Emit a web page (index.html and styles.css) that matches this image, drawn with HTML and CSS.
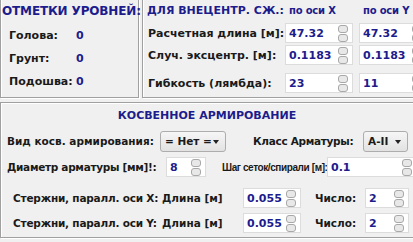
FILE: index.html
```html
<!DOCTYPE html>
<html lang="ru">
<head>
    <meta charset="UTF-8">
    <title>Армирование</title>
    <link rel="stylesheet" href="styles.css">
</head>
<body>
    <div class="top">
        <div class="panel levels">
            <div class="title big">ОТМЕТКИ УРОВНЕЙ:</div>
            <div class="lv-row"><span class="lv-label">Голова:</span><span class="val">0</span></div>
            <div class="lv-row"><span class="lv-label">Грунт:</span><span class="val">0</span></div>
            <div class="lv-row"><span class="lv-label">Подошва:</span><span class="val">0</span></div>
        </div>
        <div class="panel ecc">
            <div class="title ecc-title">ДЛЯ ВНЕЦЕНТР. СЖ.:</div>
            <div class="axis">по оси X</div>
            <div class="axis">по оси Y</div>

            <div class="ecc-label">Расчетная длина [м]:</div>
            <div class="field"><span class="val">47.32</span><span class="spin"><i></i><i></i></span></div>
            <div class="field"><span class="val">47.32</span><span class="spin"><i></i><i></i></span></div>

            <div class="ecc-label">Случ. эксцентр. [м]:</div>
            <div class="field"><span class="val">0.1183</span><span class="spin"><i></i><i></i></span></div>
            <div class="field"><span class="val">0.1183</span><span class="spin"><i></i><i></i></span></div>

            <div class="ecc-label row3">Гибкость (лямбда):</div>
            <div class="field row3"><span class="val">23</span><span class="spin"><i></i><i></i></span></div>
            <div class="field row3"><span class="val">11</span><span class="spin"><i></i><i></i></span></div>
        </div>
    </div>

    <div class="panel armor">
        <div class="armor-title">КОСВЕННОЕ АРМИРОВАНИЕ</div>
        <div class="armor-row">
            <span class="lbl type-lbl">Вид косв. армирования:</span>
            <span class="select sel-type">= Нет =<span class="arrow"></span></span>
            <span class="lbl cls-lbl">Класс Арматуры:</span>
            <span class="select sel-class">A-II<span class="arrow"></span></span>
        </div>
        <div class="armor-row">
            <span class="lbl diam-lbl">Диаметр арматуры [мм]!:</span>
            <span class="field f-diam"><span class="val">8</span><span class="spin"><i></i><i></i></span></span>
            <span class="lbl step-lbl">Шаг сеток/спирали [м]:</span>
            <span class="field f-step"><span class="val">0.1</span><span class="spin"><i></i><i></i></span></span>
        </div>
        <div class="rods">
            <div class="rod-row">
                <span class="lbl rod-name">Стержни, паралл. оси X:</span>
                <span class="lbl rod-len">Длина [м]</span>
                <span class="field f-len"><span class="val">0.055</span><span class="spin"><i></i><i></i></span></span>
                <span class="lbl rod-num">Число:</span>
                <span class="field f-num"><span class="val">2</span><span class="spin"><i></i><i></i></span></span>
            </div>
            <div class="rod-row">
                <span class="lbl rod-name">Стержни, паралл. оси Y:</span>
                <span class="lbl rod-len">Длина [м]</span>
                <span class="field f-len"><span class="val">0.055</span><span class="spin"><i></i><i></i></span></span>
                <span class="lbl rod-num">Число:</span>
                <span class="field f-num"><span class="val">2</span><span class="spin"><i></i><i></i></span></span>
            </div>
        </div>
    </div>
</body>
</html>
```

FILE: styles.css
```css
body {
    margin: 0;
    width: 413px;
    height: 242px;
    overflow: hidden;
    background-color: #f0f0f0;
    font-family: "DejaVu Sans", Verdana, sans-serif;
    font-size: 11px;
    font-weight: bold;
    color: #1a1a1a;
}
.top {
    display: flex;
    gap: 3px;
    margin-top: -3px;
    height: 101px;
}
.panel {
    box-sizing: border-box;
    border: 1px solid #a0a0a0;
    box-shadow: inset 1px 1px 0 #fff, 1px 1px 0 #fff;
}
.title {
    color: #1c1c8c;
    white-space: nowrap;
}
.big {
    font-size: 12px;
    letter-spacing: -0.15px;
}
.val {
    color: #1c1c8c;
}

/* levels */
.levels {
    width: 139px;
    padding: 6px 0 0 1px;
    flex: none;
}
.lv-row {
    display: flex;
    margin-top: 10px;
    padding-left: 7px;
    height: 13px;
}
.levels .title + .lv-row {
    margin-top: 11px;
}
.lv-label {
    width: 67px;
}

/* eccentric compression */
.ecc {
    flex: none;
    width: 300px;
    display: grid;
    grid-template-columns: 136px 68px 68px;
    grid-template-rows: 17px 20px 20px 4px 20px;
    column-gap: 6px;
    row-gap: 2px;
    padding: 6px 0 0 0;
    align-items: center;
}
.ecc-title {
    align-self: start;
    padding-left: 4px;
}
.axis {
    align-self: start;
    color: #1c1c8c;
    padding: 1px 0 0 4px;
    font-size: 10px;
    letter-spacing: -0.2px;
    white-space: nowrap;
}
.ecc-label {
    padding-left: 5px;
    white-space: nowrap;
}
.row3 {
    grid-row: 5;
}
.field {
    box-sizing: border-box;
    flex: none;
    height: 20px;
    display: flex;
    align-items: center;
    justify-content: space-between;
    background-color: #fff;
    border: 1px solid #dcdcdc;
    padding: 0 4px 0 3px;
    font-size: 11px;
}
.spin {
    display: flex;
    flex-direction: column;
    gap: 1px;
}
.spin i {
    display: block;
    width: 8px;
    height: 6px;
    border: 1px solid #a8a8a8;
    border-radius: 3px;
    background-color: #e8e8e8;
}

/* indirect reinforcement */
.armor {
    margin-top: 4px;
    width: 420px;
    height: 136px;
    padding: 6px 0 0 6px;
    font-size: 10.5px;
}
.armor-title {
    text-align: center;
    color: #1c1c8c;
    font-size: 11px;
    margin-left: -12px;
    height: 14px;
}
.armor-row {
    display: flex;
    align-items: center;
    margin-top: 8px;
    height: 20px;
}
.armor-row + .armor-row {
    margin-top: 6px;
}
.lbl {
    flex: none;
    white-space: nowrap;
}
.select {
    box-sizing: border-box;
    flex: none;
    position: relative;
    display: flex;
    align-items: center;
    height: 21px;
    padding-left: 4px;
    border: 1px solid #adadad;
    border-radius: 3px;
    background: linear-gradient(#f6f6f6, #e2e2e2);
}
.arrow {
    position: absolute;
    right: 6px;
    top: 8px;
    border-left: 3px solid transparent;
    border-right: 3px solid transparent;
    border-top: 4px solid #222;
}
.type-lbl {
    width: 153px;
}
.sel-type {
    width: 66px;
}
.cls-lbl {
    margin-left: 27px;
    width: 110px;
    letter-spacing: -0.3px;
}
.sel-class {
    width: 45px;
}
.diam-lbl {
    width: 159px;
    letter-spacing: -0.3px;
}
.f-diam {
    width: 40px;
}
.step-lbl {
    margin-left: 16px;
    width: 105px;
    font-family: "Liberation Sans", Arial, sans-serif;
    font-size: 10px;
    letter-spacing: -0.4px;
}
.f-step {
    width: 90px;
}
.rods {
    margin-top: 5px;
    padding-top: 3px;
}
.rod-row {
    display: flex;
    align-items: center;
    height: 20px;
    padding-left: 6px;
    margin-top: 3px;
}
.rod-row + .rod-row {
    margin-top: 5px;
}
.rod-name {
    width: 149px;
    letter-spacing: -0.2px;
}
.rod-len {
    width: 81px;
}
.f-len {
    width: 58px;
}
.rod-num {
    margin-left: 14px;
    width: 50px;
}
.f-num {
    width: 44px;
}
```
